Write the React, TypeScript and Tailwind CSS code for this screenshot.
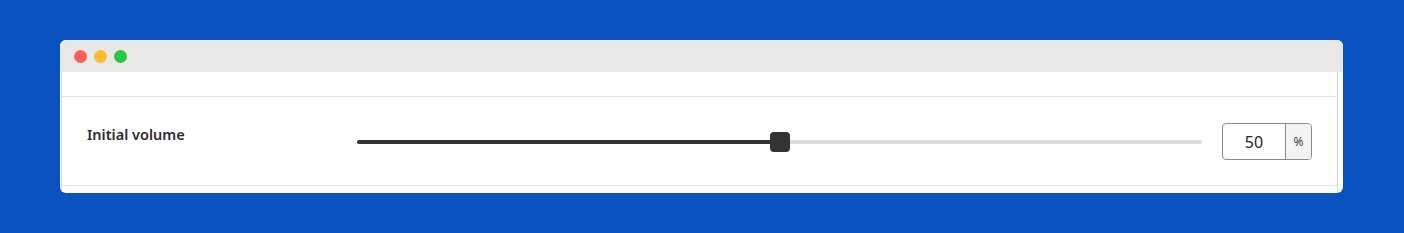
export default function App() {
  const value = 50
  return (
    <div className="w-[1404px] h-[233px] bg-[#0a52c0] pt-[40px] pl-[60px]" style={{ fontFamily: '"Noto Sans", "Open Sans", sans-serif' }}>
      <div className="w-[1283px] h-[153px] bg-white rounded-[6px] overflow-hidden flex flex-col">
        <div className="h-[32px] bg-[#e8e8e8] flex items-center gap-[7px] pl-[14px] shrink-0">
          <span className="w-[13px] h-[13px] rounded-full bg-[#ff5f57]" />
          <span className="w-[13px] h-[13px] rounded-full bg-[#febc2e]" />
          <span className="w-[13px] h-[13px] rounded-full bg-[#28c840]" />
        </div>
        <div className="flex-1 flex pr-[5px]">
          <div className="flex-1 ml-[1px] border-l border-r border-[#d6d6d6] pt-[24px]">
            <div className="border-t border-b border-[#e6e6e6] h-[90px] flex items-center pl-[25px] pr-[25px]">
              <div className="w-[270px] text-[14.5px] font-semibold text-[#2b2b2b] -mt-[12px]">Initial volume</div>
              <div className="flex-1 relative h-[20px] mr-[20px] mt-[2px]">
                <div className="absolute left-0 right-0 top-[8px] h-[4px] rounded-full bg-[#dddddd]" />
                <div className="absolute left-0 top-[8px] h-[4px] rounded-full bg-[#333333]" style={{ width: `${value}%` }} />
                <div className="absolute top-0 w-[20px] h-[20px] rounded-[4px] bg-[#333333] -translate-x-1/2" style={{ left: `${value}%` }} />
              </div>
              <div className="flex h-[37px] border border-[#8a8a8a] rounded-[4px] overflow-hidden mt-[1px]">
                <div className="w-[62px] flex items-center justify-center text-[16px] text-[#222]">{value}</div>
                <div className="w-[26px] border-l border-[#8a8a8a] bg-[#f3f3f3] flex items-center justify-center text-[12px] text-[#444]">%</div>
              </div>
            </div>
          </div>
        </div>
      </div>
    </div>
  )
}
